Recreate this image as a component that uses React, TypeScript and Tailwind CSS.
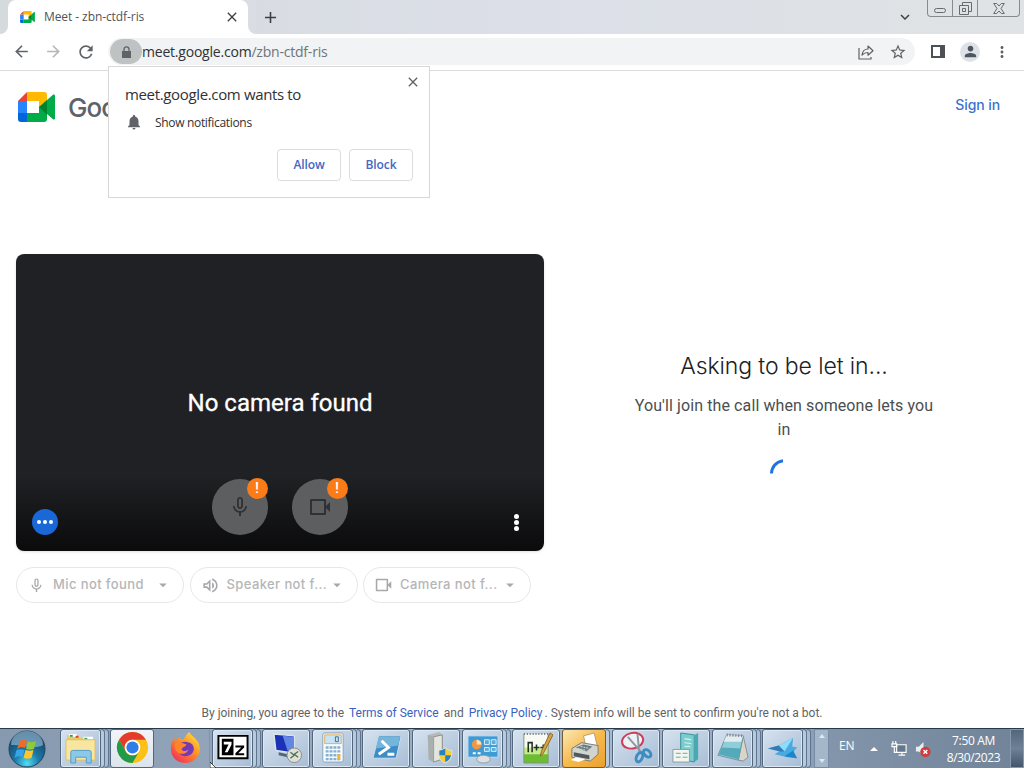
import type { ReactNode } from 'react'
import { clsx } from 'clsx'
import {
  MdAdd,
  MdArrowBack,
  MdArrowDropDown,
  MdArrowForward,
  MdClose,
  MdExpandMore,
  MdMicNone,
  MdMoreVert,
  MdNotifications,
  MdOutlineVolumeUp,
  MdPerson,
  MdRefresh,
  MdStarBorder,
} from 'react-icons/md'

const segoe = "font-['Open_Sans','Noto_Sans',sans-serif]"
const google = "font-['Inter','Open_Sans',sans-serif]"
const roboto = "font-['Roboto','Liberation_Sans',sans-serif]"

function MeetLogo({ className }: { className?: string }) {
  return (
    <svg viewBox="0 0 37 30" className={className}>
      <path d="M0 9h9v12H0z" fill="#2684fc" />
      <path d="M0 9 9 0v9z" fill="#ea4335" />
      <path d="M9 0h17a3 3 0 0 1 3 3v9l-8 5V9H9z" fill="#ffba00" />
      <path d="M0 21h9v9H3a3 3 0 0 1-3-3z" fill="#0066da" />
      <path d="M9 21h12v-6l8-3v15a3 3 0 0 1-3 3H9z" fill="#00ac47" />
      <path d="M21 15 29 8v15z" fill="#00832d" />
      <path d="m29 8 6-5.300c.8-.6 2-.2 2 .9v22.800c0 1-1.200 1.500-2 .9L29 22z" fill="#00ac47" />
    </svg>
  )
}

function CameraIcon({ className }: { className?: string }) {
  return (
    <svg viewBox="0 0 22 18" className={className} fill="none" stroke="currentColor">
      <path d="M2 2h14v14H2z" strokeWidth="2" strokeLinejoin="round" />
      <path d="M16 9 21 4v10z" fill="currentColor" stroke="none" />
    </svg>
  )
}

function TabStrip() {
  return (
    <div className="flex h-[34px] items-stretch bg-gradient-to-r from-[#d5dadd] via-[#dcdfe8] to-[#dfe3e5]">
      <div className="w-2 bg-white">
        <div className="h-full rounded-br-lg bg-[#d5dadd]" />
      </div>
      <div className="flex w-[240px] items-center rounded-t-lg bg-white pl-3 pr-2">
        <MeetLogo className="h-[12px] w-[15px]" />
        <span className={clsx(segoe, 'ml-[9px] flex-1 whitespace-nowrap text-[12px] tracking-[-0.08px] text-[#505458]')}>
          Meet - zbn-ctdf-ris
        </span>
        <MdClose className="size-4 shrink-0 text-[#3c4043]" />
      </div>
      <div className="w-2 bg-white">
        <div className="h-full rounded-bl-lg bg-[#dadee4]" />
      </div>
      <div className="flex w-7 items-center justify-center">
        <MdAdd className="size-[19px] text-[#3c4043]" />
      </div>
      <div className="flex-1" />
      <div className="flex w-[30px] items-center justify-center">
        <MdExpandMore className="size-[18px] text-[#3c4043]" />
      </div>
      <div className="ml-[7px] mr-[4px] flex h-[17px] w-[93px] rounded-b border border-t-0 border-[#858b8f] text-[#666b6e]">
        <div className="flex w-[25px] items-end justify-center border-r border-[#858b8f] pb-[3px]">
          <div className="h-[5px] w-3 rounded-sm border border-current" />
        </div>
        <div className="flex w-[25px] items-center justify-center border-r border-[#858b8f]">
          <svg viewBox="0 0 13 13" className="size-[13px]" fill="none" stroke="currentColor">
            <path d="M3.500 3.500v-3h9v9h-3" />
            <path d="M.5 3.500h9v9h-9zM3.500 6.500h3v3h-3z" />
          </svg>
        </div>
        <div className="flex flex-1 items-center justify-center">
          <svg viewBox="0 0 12 11" className="h-[11px] w-3" fill="none" stroke="currentColor">
            <path d="M.7.5h3L6 3 8.300.5h3L8 5.500l3.300 5h-3L6 8l-2.300 2.500h-3L4 5.500z" />
          </svg>
        </div>
      </div>
    </div>
  )
}

function Toolbar() {
  return (
    <div className="flex h-[37px] items-center border-b border-[#d9dbdd] bg-white pb-px text-[#5f6368]">
      <div className="flex w-[108px] items-center gap-[13px] pl-[12px]">
        <MdArrowBack className="size-[19px]" />
        <MdArrowForward className="size-[19px] text-[#b4b6b9]" />
        <MdRefresh className="size-[20px]" />
      </div>
      <div className="flex h-[27px] w-[807px] items-center rounded-full bg-[#f1f3f4] pl-[2px] pr-[8px]">
        <div className="flex h-[25px] w-[32px] items-center justify-center rounded-full bg-[#bfc2c3]">
          <svg viewBox="0 0 9 12" className="h-3 w-[9px]">
            <path d="M0 5h9v7H0z" fill="currentColor" />
            <path d="M2 5V3.300a2.500 2.500 0 0 1 5 0V5" fill="none" stroke="currentColor" strokeWidth="1.300" />
          </svg>
        </div>
        <p className={clsx(segoe, 'whitespace-nowrap text-[14px] tracking-[-0.21px] text-[#70757a]')}>
          <span className="text-[#303134]">meet.google.com</span>/zbn-ctdf-ris
        </p>
        <div className="flex-1" />
        <svg viewBox="0 0 16 16" className="mr-[15px] size-4" fill="none" stroke="currentColor" strokeWidth="1.200">
          <path d="M1 4v11h12v-2" />
          <path d="M4 11c.5-4 2.500-6 6-6V2l5 4.800-5 4.400V8.500c-2.500 0-4.300.8-6 2.500z" strokeLinejoin="round" />
        </svg>
        <MdStarBorder className="size-[18px]" />
      </div>
      <div className="ml-[16px] h-[13px] w-[14px] border-2 border-r-[5px] border-[#4d5156]" />
      <div className="ml-[15px] flex size-5 items-center justify-center rounded-full bg-[#dee1e6]">
        <MdPerson className="size-[17px] text-[#4d5560]" />
      </div>
      <MdMoreVert className="ml-[13px] size-[18px]" />
    </div>
  )
}

function PermissionPrompt() {
  return (
    <div
      className={clsx(
        segoe,
        'absolute left-[108px] top-[66px] z-10 flex h-[132px] w-[322px] flex-col border border-[#d6d8da] bg-white pl-4 pr-4 text-[#303134]',
      )}
    >
      <div className="flex h-[38px] items-end justify-between">
        <p className="whitespace-nowrap text-[15px] leading-[22px] tracking-[-0.35px]">meet.google.com wants to</p>
        <MdClose className="mb-[15px] -mr-[8px] size-4 text-[#5f6368]" />
      </div>
      <div className="mt-[9px] flex h-[18px] items-center gap-[12px]">
        <MdNotifications className="mb-[2px] size-[18px] text-[#5f6368]" />
        <span className="whitespace-nowrap text-[12px] tracking-[-0.32px]">Show notifications</span>
      </div>
      <div className="mt-[17px] flex justify-end gap-2 text-[12px] font-semibold tracking-[-0.1px] text-[#4468c4]">
        <button className="h-8 w-16 rounded border border-[#dadce0]">Allow</button>
        <button className="h-8 w-16 rounded border border-[#dadce0]">Block</button>
      </div>
    </div>
  )
}

function DeviceButton({ children }: { children: ReactNode }) {
  return (
    <div className="relative size-14 rounded-full bg-[#5d5e60]">
      <div className="flex size-full items-center justify-center text-[#303134]">{children}</div>
      <div
        className={clsx(
          roboto,
          'absolute -top-px right-[0.5px] flex size-[21px] items-center justify-center rounded-full bg-[#fa7b17] text-[15px] font-medium text-white',
        )}
      >
        !
      </div>
    </div>
  )
}

function VideoPreview() {
  return (
    <div className="flex h-[297px] w-[528px] flex-col rounded-lg bg-gradient-to-b from-[#202124] from-75% to-[#0b0b0c] shadow-sm">
      <p className={clsx(roboto, 'mt-[131px] text-center text-[24px] leading-[36px] text-white [-webkit-text-stroke:0.3px_white]')}>
        No camera found
      </p>
      <div className="mt-[58px] flex px-4">
        <div className="mt-[30px] flex size-[26px] items-center justify-center gap-[2px] rounded-full bg-[#1a67d8]">
          <i className="size-1 rounded-full bg-white" />
          <i className="size-1 rounded-full bg-white" />
          <i className="size-1 rounded-full bg-white" />
        </div>
        <div className="ml-[154px] flex gap-6">
          <DeviceButton>
            <MdMicNone className="size-[24px]" />
          </DeviceButton>
          <DeviceButton>
            <CameraIcon className="h-[18px] w-[22px]" />
          </DeviceButton>
        </div>
        <div className="ml-auto mr-[9px] mt-[35px] flex flex-col items-center gap-[1px]">
          <i className="size-[5px] rounded-full bg-white" />
          <i className="size-[5px] rounded-full bg-white" />
          <i className="size-[5px] rounded-full bg-white" />
        </div>
      </div>
    </div>
  )
}

function DevicePill({ icon, label }: { icon: ReactNode; label: string }) {
  return (
    <div className="flex h-[36px] w-[168px] items-center rounded-full border border-[#e6e7e9] pl-[11px] pr-[11px] text-[#a6a8ab]">
      <span className="flex w-[17px] justify-center">{icon}</span>
      <span className={clsx(google, 'ml-2 flex-1 whitespace-nowrap text-[13px] font-medium tracking-[0.4px] text-[#b4b6b8]')}>{label}</span>
      <MdArrowDropDown className="size-[18px] shrink-0" />
    </div>
  )
}

function MeetPage() {
  return (
    <div className="flex h-[657px] flex-col bg-white">
      <header className="flex h-[72px] items-center justify-between pl-[18px] pr-[24px]">
        <div className="flex items-center gap-[13px]">
          <MeetLogo className="h-[30px] w-[37px]" />
          {/* The wordmark runs under the permission prompt */}
          <span className={clsx(google, 'w-10 overflow-hidden text-[26px] font-medium tracking-[-1px] text-[#5f6368]')}>Goo</span>
        </div>
        <a className={clsx(google, 'mb-[6px] text-[14px] font-medium tracking-[-0.1px] text-[#3b72cf]')}>Sign in</a>
      </header>
      <main className="flex flex-1 pt-[111px]">
        <section className="ml-4 w-[528px]">
          <VideoPreview />
          <div className="mt-4 flex gap-[5.500px]">
            <DevicePill icon={<MdMicNone className="size-[17px]" />} label="Mic not found" />
            <DevicePill icon={<MdOutlineVolumeUp className="size-[19px] shrink-0" />} label="Speaker not f..." />
            <DevicePill icon={<CameraIcon className="h-[14px] w-[17px]" />} label="Camera not f..." />
          </div>
        </section>
        <section className="flex flex-1 flex-col items-center pt-[96px]">
          <h1 className={clsx(google, 'whitespace-nowrap text-[23px] font-light leading-[32px] tracking-[-0.1px] text-[#202124]')}>
            Asking to be let in...
          </h1>
          <p className={clsx(roboto, 'mt-[12px] w-[310px] text-center text-[16px] leading-6 tracking-[0.1px] text-[#4a4e51]')}>
            You'll join the call when someone lets you in
          </p>
          <svg viewBox="0 0 28 28" className="mt-[14px] size-7" fill="none">
            <path d="M1.500 17.500C1.700 11.500 5.500 5.800 13 4.700" stroke="#1f74dd" strokeWidth="3" />
          </svg>
        </section>
      </main>
      <footer className={clsx(roboto, 'flex h-[31px] items-center justify-center whitespace-nowrap text-[12px] text-[#5f6368]')}>
        By joining, you agree to the
        <a className="ml-[5px] mr-[5px] text-[#3b5fc0]">Terms of Service</a>
        and
        <a className="ml-[5px] mr-[2px] text-[#3b5fc0]">Privacy Policy</a>
        . System info will be sent to confirm you're not a bot.
      </footer>
    </div>
  )
}

function StartOrb() {
  return (
    <svg viewBox="0 0 40 40" className="size-10">
      <defs>
        <radialGradient id="orb" cx="50%" cy="90%" r="85%">
          <stop offset="0" stopColor="#4fe0f4" />
          <stop offset=".4" stopColor="#1c79a8" />
          <stop offset="1" stopColor="#123e64" />
        </radialGradient>
      </defs>
      <circle cx="20" cy="20" r="18" fill="url(#orb)" stroke="#26435c" />
      <path d="M4 16a16 14 0 0 1 32 0c-8 5-23-1-32 0z" fill="#9fc4da" opacity=".6" />
      <path d="M13 12c3-2 5-1 7 0l-2 7c-3-1-5-1-8 1z" fill="#f06a28" />
      <path d="M21 12.500c3 1 5 1 8-.5l-2 8c-3 1-5 1-8 0z" fill="#8fc93c" />
      <path d="M9.500 21c3-1 5-1 8 0l-2 7c-3-1-5-1-8 1z" fill="#35a4e8" />
      <path d="M18.500 21c3 1 5 1 8 0l-2 8c-3 1-5 1-8 0z" fill="#fdc62c" />
    </svg>
  )
}

const appIcons: Record<string, ReactNode> = {
  explorer: (
    <>
      <path d="M3 4h11l2 3h15v22H3z" fill="#e9ca6b" />
      <path d="M5 3h8v3H5zM20 6h10v3H20z" fill="#fff" />
      <path d="M6 4h3v2H6z" fill="#3c9a4a" />
      <path d="M12 5h3v2h-3z" fill="#d9482b" />
      <path d="M21 7h3v2h-3z" fill="#4aa554" />
      <path d="M2 9h30v21H2z" fill="#f8e6a0" stroke="#ddbf67" />
      <path d="M7 33V22q0-2 2-2h17q2 0 2 2v11h-5v-6H12v6z" fill="#8bc9eb" stroke="#539bc6" />
    </>
  ),
  chrome: (
    <>
      <circle cx="17" cy="17" r="16" fill="#fbc116" />
      <path d="M3.140 9A16 16 0 0 1 30.860 9H17a8 8 0 0 0-6.930 12z" fill="#e33b2e" />
      <path d="M3.140 9A16 16 0 0 0 17 33l6.930-12a8 8 0 0 1-13.860 0z" fill="#229a4c" />
      <circle cx="17" cy="17" r="8" fill="#fff" />
      <circle cx="17" cy="17" r="6.300" fill="#2f7de9" />
    </>
  ),
  firefox: (
    <>
      <defs>
        <linearGradient id="fox" x1="1" y1="0" x2=".2" y2="1">
          <stop offset="0" stopColor="#fff04c" />
          <stop offset=".45" stopColor="#ff9826" />
          <stop offset="1" stopColor="#f32d59" />
        </linearGradient>
      </defs>
      <path d="M21 1c2 4 5 5 8 9 6 8 2 22-11 23C7 33 1 26 2 16c0-4 2-7 4-9v4l4-4c2 1 3 2 5 2 2-4 3-6 6-8z" fill="url(#fox)" />
      <path d="M10 15c2-5 10-5 14-1 4 5 0 12-7 12-5 0-9-4-7-11z" fill="#743ab8" />
      <path d="M6 13c4-3 8 0 12 1-1 3-4 2-5 5 2 3 6 1 7 0-1 5-9 6-12 2-2-2-3-5-2-8z" fill="#ff842c" />
    </>
  ),
  sevenzip: (
    <>
      <path d="M2.500 5h30v23h-30z" fill="#fff" stroke="#000" strokeWidth="2" />
      <path d="M6 8h12v17H6z" fill="#000" />
      <path d="M8 11h8v3l-4 8H9l4-8H8z" fill="#fff" />
      <path d="M20 15h9v2l-6 6h6v2h-9v-2l6-6h-6z" fill="#000" />
    </>
  ),
  remote: (
    <>
      <path d="m4 3 21 2v18L6 20z" fill="#1b31b6" stroke="#dae4ee" strokeWidth="1.500" />
      <path d="m13 5 11 1v15l-6-1z" fill="#6385e3" />
      <path d="m9 22 9 2v3l-9-2z" fill="#566575" />
      <circle cx="25" cy="25" r="7.500" fill="#dfe1d8" stroke="#888f85" />
      <path d="m21 22 4 3-4 3M29 21l-4 3 4 3" fill="none" stroke="#487050" strokeWidth="1.300" />
    </>
  ),
  calculator: (
    <>
      <rect x="7" y="2" width="21" height="30" rx="2" fill="#f8fafb" stroke="#85a6bf" />
      <path d="M9 4h17v9H9z" fill="#c6e4f6" stroke="#e6ac56" />
      <path d="M20 6h3v5h-3z" fill="none" stroke="#406d92" />
      <path d="M10 17h15M10 21h15M10 25h15M10 29h15" stroke="#84afd0" strokeWidth="2.500" strokeDasharray="3 1" />
      <path d="M22 24h3v6h-3z" fill="#efb33b" />
    </>
  ),
  powershell: (
    <>
      <path d="M9 5h23l-5 23H3z" fill="#3e8cc5" stroke="#cbdfed" />
      <path d="M9 6h22l-2 9L6 18z" fill="#75b5da" />
      <path d="m12 10 7 7-10 7M18 24h7" fill="none" stroke="#fff" strokeWidth="3" />
    </>
  ),
  server: (
    <>
      <path d="m8 4 12-3 3 3v25l-9 3-5-3z" fill="#b7bbb7" />
      <path d="m14 6 9-2v25l-9 3z" fill="#e4e5dd" stroke="#898e8c" />
      <path d="m8 4 6 2v26l-5-3z" fill="#a9afae" />
      <path d="M19 20c3 0 5-1 7-3 2 2 4 3 7 3 0 7-2 11-7 13-5-2-7-6-7-13z" fill="#f6cd34" stroke="#dce4e8" />
      <path d="M26 18v7h-6v-5c3 0 4-1 6-2M26 25h6c-1 4-3 6-6 7z" fill="#2583c5" />
    </>
  ),
  control: (
    <>
      <path d="M2 5h31v22H2z" fill="#3f9bd6" stroke="#bfdff1" />
      <circle cx="11" cy="14" r="5" fill="#f39643" />
      <path d="M11 9v5h5a5 5 0 0 0-5-5z" fill="#f7e3bb" />
      <path d="M19 9h5v5h-5zM26 9h5v5h-5zM19 17h5v4h-5zM26 17h5v4h-5z" fill="#5dabd9" stroke="#dceff9" />
      <path d="M7 23h3M12 23h3" stroke="#fff" strokeWidth="2" />
      <ellipse cx="18" cy="29" rx="7" ry="4" fill="#dce0e2" stroke="#949da4" />
    </>
  ),
  notepadpp: (
    <>
      <path d="M4 3h25v30H4z" fill="#f7fbf3" />
      <path d="M4 23h25v10H4z" fill="#6cbd32" />
      <path d="M4 17h25v7H4z" fill="#c9e98d" />
      <path d="M4 3h25" stroke="#65676b" strokeWidth="2" strokeDasharray="1 2" />
      <path d="M4 3v30h25V3" fill="none" stroke="#839477" />
      <path d="M8.500 22V12h4v10M14 17h6M17 14v6M21 17h6M24 14v6" fill="none" stroke="#203124" strokeWidth="1.600" />
      <path d="m31 2 3 2-10 19-3 3 1-5z" fill="#d6a445" stroke="#8c6630" />
    </>
  ),
  printer: (
    <>
      <path d="m16 5 11-3 3 13-11 4z" fill="#fff" stroke="#bd9d68" />
      <path d="m4 18 10-6 17 3v9l-8 7-19-4z" fill="#d3d4ce" stroke="#777b79" />
      <path d="m8 17 8-3 9 2-6 5z" fill="#687c81" />
      <path d="m6 22 16 3v4L6 26z" fill="#4f5a5d" />
      <path d="m8 27 10 2-7 3-8-2z" fill="#fff" />
      <path d="m10 18 9 2M13 16l9 2" stroke="#dce2d9" strokeDasharray="2 1" />
    </>
  ),
  snipping: (
    <>
      <ellipse cx="13" cy="10" rx="11" ry="8" transform="rotate(-12 13 10)" fill="#eff2f4" stroke="#d13c58" strokeWidth="2" />
      <path d="m8 6 15 17M18 3l2 21" stroke="#8b98a2" strokeWidth="2" />
      <ellipse cx="20" cy="27" rx="3" ry="5" transform="rotate(25 20 27)" fill="none" stroke="#3c8dc4" strokeWidth="3" />
      <ellipse cx="28" cy="23" rx="4.500" ry="3" transform="rotate(45 28 23)" fill="none" stroke="#3c8dc4" strokeWidth="3" />
    </>
  ),
  backup: (
    <>
      <path d="m11 2 14 2v28l-9-2-5-3z" fill="#7accce" stroke="#398e9a" />
      <path d="m25 4 4-2v27l-4 3z" fill="#4aa9ae" />
      <path d="m15 8 7 1M15 12l7 1M15 16h6" stroke="#c7f0e9" strokeWidth="1.500" />
      <path d="M3 19h17v13H3z" fill="#f4f6ee" stroke="#829fa5" />
      <path d="M6 23h5M6 27h5M13 23h5M13 27h5" stroke="#54aeb4" />
    </>
  ),
  notepad: (
    <>
      <path d="m28 5 5 22-5 4-5-1z" fill="#d9d6c9" stroke="#8b8d88" />
      <path d="m11 4 17 1-5 25-21-5z" fill="#8fcdd8" stroke="#7394a4" />
      <path d="m11 4 17 1-2 6-18 0z" fill="#e1edf0" />
      <path d="m11 4 18 1" stroke="#6d7980" strokeWidth="3" strokeDasharray="1 2" />
      <path d="m6 17 20 1-3 11-20-5z" fill="#54aab8" />
    </>
  ),
  bird: (
    <>
      <path d="m2 18 11-3 15-8-1 9 5 1-4 5 4 6-10-1-13-3 6-4z" fill="#49a9e1" />
      <path d="m13 15 15-8-9 14z" fill="#8edbfa" />
      <path d="m2 18 11-3 6 6-5 0z" fill="#327db8" />
      <path d="m19 26 9-6 4 8z" fill="#1788cd" />
    </>
  ),
}

const taskbarApps = [
  { id: 'explorer', stacked: true },
  { id: 'chrome', active: true },
  { id: 'firefox', plain: true },
  { id: 'sevenzip', stacked: true },
  { id: 'remote' },
  { id: 'calculator', stacked: true },
  { id: 'powershell' },
  { id: 'server' },
  { id: 'control', stacked: true },
  { id: 'notepadpp' },
  { id: 'printer', orange: true },
  { id: 'snipping' },
  { id: 'backup' },
  { id: 'notepad', stacked: true },
  { id: 'bird', stacked: true },
]

function TaskbarApp({ app }: { app: (typeof taskbarApps)[number] }) {
  return (
    <div className={clsx('flex h-full shrink-0', app.plain ? 'w-[52px]' : 'w-[50px]')}>
      <div
        className={clsx(
          'flex h-full items-center justify-center rounded-[3px] border pb-[2px]',
          app.stacked ? 'w-[41px]' : app.orange || app.active ? 'w-[44px]' : app.plain ? 'w-[50px]' : 'w-[48px]',
          app.plain && 'border-transparent border-r-[#8195aa]',
          app.orange && 'border-[#795a30] bg-gradient-to-br from-[#fae9b1] via-[#f6ba4c] to-[#eda02b]',
          app.active && 'border-[#52677e] bg-gradient-to-b from-[#f1f4f8] to-[#dce4ed]',
          !app.plain &&
            !app.orange &&
            !app.active &&
            'border-[#52677e] bg-gradient-to-br from-[#d6e2ef] to-[#a7bdd5] shadow-[inset_0_0_0_1px_#dbe7f2]',
        )}
      >
        <svg viewBox="0 0 34 34" className="size-[33px] shrink-0">
          {appIcons[app.id]}
        </svg>
      </div>
      {app.stacked && (
        <>
          <div className="w-1 rounded-r border border-l-0 border-[#60758d] bg-[#b7cade]" />
          <div className="w-1 rounded-r border border-l-0 border-[#60758d] bg-[#a8bdd3]" />
        </>
      )}
      {app.orange && <div className="w-[4px] rounded-r border border-l-0 border-[#60758d] bg-[#b7cade]" />}
    </div>
  )
}

function Taskbar() {
  return (
    <div className="flex h-[40px] border-t border-[#29394c] bg-gradient-to-r from-[#8799ae] via-[#a6b9cd] via-60% to-[#71849b]">
      <div className="flex w-[60px] pl-[7px]">
        <StartOrb />
      </div>
      {taskbarApps.map((app) => (
        <TaskbarApp key={app.id} app={app} />
      ))}
      <div className="ml-[2px] flex w-[15px] flex-col items-center justify-between border border-[#778da5] bg-[#a4b7ca] py-1">
        <i className="border-x-[3px] border-b-4 border-x-transparent border-b-[#dce7f0]" />
        <i className="border-x-[3px] border-t-4 border-x-transparent border-t-[#dce7f0]" />
      </div>
      <div className={clsx(segoe, 'flex flex-1 bg-gradient-to-r from-[#8395aa] to-[#72849a] text-[12px] text-white')}>
        <span className="ml-[10px] mt-[8px] w-[31px] tracking-[-0.200px]">EN</span>
        <i className="mt-[18px] h-0 border-x-4 border-b-4 border-x-transparent border-b-white" />
        <svg viewBox="0 0 18 18" className="ml-[13px] mt-[12px] size-[17px]">
          <path d="M6 4h10v8H6z" fill="#63788d" stroke="#fff" strokeWidth="1.200" />
          <path d="M8 15h7M11.500 12v3M1 3h5v3H1zM2 0v3M5 0v3M3.500 6v6H6" fill="none" stroke="#fff" strokeWidth="1.200" />
        </svg>
        <svg viewBox="0 0 18 18" className="ml-[7px] mt-[12px] size-[17px]">
          <path d="M1 6h3l5-5v14l-5-4H1z" fill="#e7eef3" />
          <circle cx="11" cy="11.500" r="5.500" fill="#d53a3a" />
          <path d="m9 9.500 4 4M13 9.500l-4 4" stroke="#fff" strokeWidth="1.500" />
        </svg>
        <div className="ml-[10px] w-[63px] whitespace-nowrap pt-[3px] text-center leading-[17px] tracking-[-0.35px]">
          <p>7:50 AM</p>
          <p className="-mx-2">8/30/2023</p>
        </div>
      </div>
      <div className="w-[14px] border border-[#8799ab] bg-gradient-to-b from-[#53667b] via-[#6e8197] to-[#42566c]" />
    </div>
  )
}

export default function App() {
  return (
    <div className="relative flex h-[768px] w-[1024px] flex-col overflow-hidden bg-white">
      <TabStrip />
      <Toolbar />
      <MeetPage />
      <Taskbar />
      <PermissionPrompt />
      {/* Mouse pointer resting on the bottom edge of the taskbar */}
      <svg viewBox="0 0 8 8" className="absolute bottom-0 left-[210px] size-[6px]">
        <path d="M0 0v8h8z" fill="#fff" stroke="#111" />
      </svg>
    </div>
  )
}
